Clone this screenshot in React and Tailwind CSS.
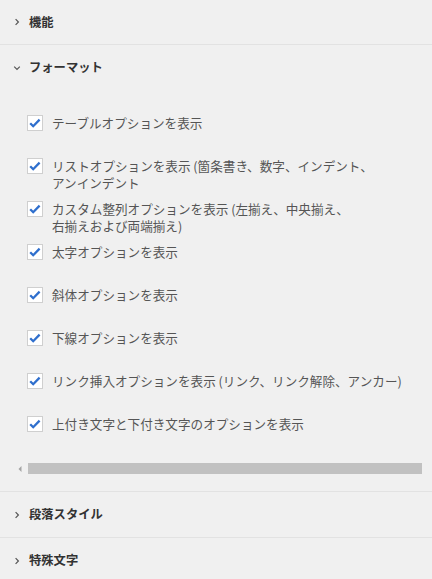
import React from "react";

const font = { fontFamily: '"Noto Sans CJK JP", "Noto Sans", sans-serif' };

function Chevron({ open }) {
  return (
    <svg width="8" height="8" viewBox="0 0 8 8" className="shrink-0">
      {open ? (
        <path d="M1.2 2.6 L4 5.4 L6.8 2.6" fill="none" stroke="#555" strokeWidth="1.2" />
      ) : (
        <path d="M2.6 1.2 L5.4 4 L2.6 6.8" fill="none" stroke="#555" strokeWidth="1.2" />
      )}
    </svg>
  );
}

function Header({ label, open, border = true, tall = false }) {
  return (
    <div
      className={
        "flex items-center gap-[8px] pl-[13px] " +
        (tall ? "h-[46px] " : "h-[45px] ") +
        (border ? "border-b border-[#e2e2e2]" : "")
      }
    >
      <Chevron open={open} />
      <span className="text-[12.3px] font-semibold leading-[17px] text-[#333]">{label}</span>
    </div>
  );
}

function Check({ lines }) {
  return (
    <div className="flex h-[43px] items-start">
      <div className="ml-[27px] mt-[1px] flex h-[16px] w-[16px] shrink-0 items-center justify-center border border-[#cfcfcf] bg-white">
        <svg width="14" height="14" viewBox="0 0 14 14">
          <path
            d="M2.2 7.2 L5.2 10.2 L11.6 3.6"
            fill="none"
            stroke="#2f6fcd"
            strokeWidth="2.3"
            strokeLinecap="butt"
            strokeLinejoin="miter"
          />
        </svg>
      </div>
      <p className="ml-[9px] whitespace-nowrap text-[12.6px] leading-[17px] text-[#555]">
        {lines[0]}
        {lines[1] ? (
          <>
            <br />
            {lines[1]}
          </>
        ) : null}
      </p>
    </div>
  );
}

export default function App() {
  const items = [
    ["テーブルオプションを表示"],
    ["リストオプションを表示 (箇条書き、数字、インデント、", "アンインデント"],
    ["カスタム整列オプションを表示 (左揃え、中央揃え、", "右揃えおよび両端揃え)"],
    ["太字オプションを表示"],
    ["斜体オプションを表示"],
    ["下線オプションを表示"],
    ["リンク挿入オプションを表示 (リンク、リンク解除、アンカー)"],
    ["上付き文字と下付き文字のオプションを表示"],
  ];
  return (
    <div className="h-[579px] w-[432px] overflow-hidden bg-[#f0f0f0]" style={font}>
      <Header label="機能" />
      <Header label="フォーマット" open border={false} />
      <div className="border-b border-[#e2e2e2] pt-[24px] pb-[17px]">
        {items.map((l, i) => (
          <Check key={i} lines={l} />
        ))}
        <div className="mt-[5px] flex h-[11px] items-center pl-[17px] pr-[10px]">
          <svg width="6" height="8" viewBox="0 0 6 8" className="shrink-0">
            <path d="M4.5 1 L1.5 4 L4.5 7 Z" fill="#a3a3a3" />
          </svg>
          <div className="ml-[5px] h-[11px] flex-1 bg-[#c1c1c1]" />
        </div>
      </div>
      <Header label="段落スタイル" tall />
      <Header label="特殊文字" border={false} />
    </div>
  );
}
